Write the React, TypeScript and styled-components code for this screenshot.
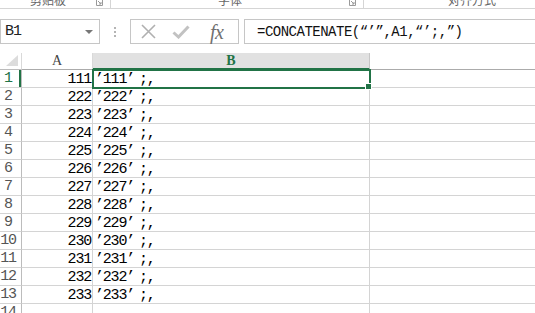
import React from 'react';
import styled, { createGlobalStyle } from 'styled-components';

const GREEN = '#217346';
const GRID = '#d4d4d4';

const values = [111, 222, 223, 224, 225, 226, 227, 228, 229, 230, 231, 232, 233];

const GlobalStyle = createGlobalStyle`
  html, body {
    margin: 0;
    padding: 0;
    background: #fff;
    overflow: hidden;
  }
  body {
    font-family: 'Liberation Mono', 'Noto Sans CJK SC', monospace;
    color: #000;
  }
`;

const Page = styled.div`
  width: 535px;
  height: 313px;
  overflow: hidden;
  display: flex;
  flex-direction: column;
  & > * {
    flex-shrink: 0;
  }
`;

/* ribbon strip, only the bottom of the group labels shows */
const Ribbon = styled.div`
  display: flex;
  height: 8px;
  border-bottom: 1px solid #d5d5d5;
`;

const RibbonGroup = styled.div<{ $width?: number }>`
  display: flex;
  align-items: flex-end;
  overflow: hidden;
  flex: ${(p) => (p.$width ? `0 0 ${p.$width}px` : '1')};
  border-right: ${(p) => (p.$width ? '1px solid #d5d5d5' : 'none')};
`;

const GroupLabel = styled.span<{ $offset?: number }>`
  flex: ${(p) => (p.$offset ? '0 0 auto' : '1')};
  margin-left: ${(p) => p.$offset ?? 0}px;
  text-align: center;
  font-family: 'Noto Sans CJK SC', sans-serif;
  font-size: 12px;
  line-height: 12px;
  color: #666;
  margin-bottom: 2px;
`;

const Launcher = styled.svg`
  flex: 0 0 auto;
  align-self: flex-start;
  margin-right: 7px;
`;

const FormulaBar = styled.div`
  display: flex;
  align-items: stretch;
  height: 25px;
  margin-top: 10px;
`;

const NameBox = styled.div`
  box-sizing: border-box;
  width: 100px;
  display: flex;
  align-items: center;
  justify-content: space-between;
  border: 1px solid #c6c6c6;
  padding: 0 6px 0 4px;
  font-size: 15px;
  letter-spacing: -1px;
  color: #222;
`;

const Caret = styled.span`
  width: 0;
  height: 0;
  border-left: 4px solid transparent;
  border-right: 4px solid transparent;
  border-top: 4px solid #777;
`;

const Grip = styled.div`
  width: 30px;
  display: flex;
  flex-direction: column;
  align-items: center;
  justify-content: center;
  gap: 2px;
  & > span {
    width: 2px;
    height: 2px;
    background: #b4b4b4;
  }
`;

const FxButtons = styled.div`
  box-sizing: border-box;
  width: 109px;
  display: flex;
  align-items: center;
  border: 1px solid #c6c6c6;
  padding: 0 7px 0 10px;
  gap: 16px;
`;

const FxLabel = styled.span`
  font-family: 'Liberation Serif', serif;
  font-style: italic;
  font-size: 20px;
  line-height: 1;
  color: #707070;
  margin-left: 4px;
  letter-spacing: -0.5px;
`;

const FormulaInput = styled.div`
  flex: 1;
  margin-left: 5px;
  display: flex;
  align-items: center;
  border: 1px solid #c6c6c6;
  border-right: none;
  padding-left: 12px;
  font-size: 14px;
  letter-spacing: -0.5px;
  color: #111;
  white-space: nowrap;
`;

const Sheet = styled.div`
  margin-top: 9px;
  display: grid;
  grid-template-columns: 22px 71px 277px 1fr;
  grid-template-rows: 17px;
  grid-auto-rows: 18px;
`;

const Corner = styled.div`
  position: relative;
  border-bottom: 1px solid #bcbcbc;
  border-right: 1px solid #d9d9d9;
  &::after {
    content: '';
    position: absolute;
    right: 3px;
    bottom: 3px;
    width: 0;
    height: 0;
    border-left: 12px solid transparent;
    border-bottom: 11px solid #dcdcdc;
  }
`;

const ColHead = styled.div<{ $active?: boolean; $last?: boolean }>`
  display: flex;
  align-items: center;
  justify-content: center;
  font-family: 'Liberation Serif', serif;
  font-size: 14px;
  color: ${(p) => (p.$active ? GREEN : '#444')};
  font-weight: ${(p) => (p.$active ? 700 : 400)};
  background: ${(p) => (p.$active ? '#e1e1e1' : '#fff')};
  border-bottom: ${(p) => (p.$active ? `2px solid ${GREEN}` : '1px solid #ababab')};
  border-right: ${(p) => (p.$last ? 'none' : `1px solid ${p.$active ? '#c6c6c6' : '#d9d9d9'}`)};
  box-sizing: border-box;
  padding-top: ${(p) => (p.$active ? '1px' : '0')};
`;

const RowHead = styled.div<{ $active?: boolean }>`
  box-sizing: border-box;
  display: flex;
  align-items: center;
  border-right: 1px solid #bcbcbc;
  border-bottom: 1px solid ${GRID};
  box-shadow: ${(p) => (p.$active ? `inset -2px 0 0 ${GREEN}` : 'none')};
  font-size: 15px;
  letter-spacing: -1.2px;
  color: ${(p) => (p.$active ? GREEN : '#555')};
  & > span {
    width: 16px;
    text-align: center;
  }
`;

const Cell = styled.div<{ $align?: 'left' | 'right'; $edge?: boolean; $selected?: boolean }>`
  position: relative;
  box-sizing: border-box;
  display: flex;
  align-items: center;
  justify-content: ${(p) => (p.$align === 'right' ? 'flex-end' : 'flex-start')};
  padding: 1px 1px 0 2px;
  border-bottom: 1px solid ${GRID};
  border-right: ${(p) => (p.$edge ? `1px solid ${GRID}` : 'none')};
  font-size: 15px;
  letter-spacing: -1.2px;
  white-space: nowrap;
  ${(p) =>
    p.$selected &&
    `
    outline: 2px solid ${GREEN};
    outline-offset: -1px;
    z-index: 1;
    &::after {
      content: '';
      position: absolute;
      right: -3px;
      bottom: -3px;
      width: 5px;
      height: 5px;
      background: ${GREEN};
      border: 1px solid #fff;
    }
  `}
`;

const CloseQuote = styled.span`
  margin-right: 5px;
`;

function launcherIcon() {
  return (
    <Launcher width="7" height="6" viewBox="0 0 7 6">
      <path d="M0.5 0 V5.5 H6.5 V0" fill="none" stroke="#9a9a9a" strokeWidth="1" />
      <path d="M2 1 L5 4 M3 4 H5 V2" fill="none" stroke="#9a9a9a" strokeWidth="1" />
    </Launcher>
  );
}

export default function App() {
  return (
    <Page>
      <GlobalStyle />
      <Ribbon>
        <RibbonGroup $width={110}>
          <GroupLabel>剪贴板</GroupLabel>
          {launcherIcon()}
        </RibbonGroup>
        <RibbonGroup $width={252}>
          <GroupLabel>字体</GroupLabel>
          {launcherIcon()}
        </RibbonGroup>
        <RibbonGroup>
          <GroupLabel $offset={84}>对齐方式</GroupLabel>
        </RibbonGroup>
      </Ribbon>

      <FormulaBar>
        <NameBox>
          B1
          <Caret />
        </NameBox>
        <Grip>
          <span />
          <span />
          <span />
        </Grip>
        <FxButtons>
          <svg width="15" height="15" viewBox="0 0 15 15">
            <path d="M1 1 L14 14 M14 1 L1 14" stroke="#b0b0b0" strokeWidth="1.6" fill="none" />
          </svg>
          <svg width="18" height="14" viewBox="0 0 18 14">
            <path d="M1.5 7.5 L6.5 12 L16.5 1.5" stroke="#c2c2c2" strokeWidth="3" fill="none" />
          </svg>
          <FxLabel>fx</FxLabel>
        </FxButtons>
        <FormulaInput>=CONCATENATE(“’”,A1,“’;,”)</FormulaInput>
      </FormulaBar>

      <Sheet>
        <Corner />
        <ColHead>A</ColHead>
        <ColHead $active>B</ColHead>
        <ColHead $last />
        {values.map((v, i) => (
          <React.Fragment key={v}>
            <RowHead $active={i === 0}>
              <span>{i + 1}</span>
            </RowHead>
            <Cell $align="right" $edge>
              {v}
            </Cell>
            <Cell $edge $selected={i === 0}>
              ’{v}
              <CloseQuote>’</CloseQuote>;,
            </Cell>
            <Cell />
          </React.Fragment>
        ))}
        <RowHead>
          <span>14</span>
        </RowHead>
        <Cell $edge />
        <Cell $edge />
        <Cell />
      </Sheet>
    </Page>
  );
}
